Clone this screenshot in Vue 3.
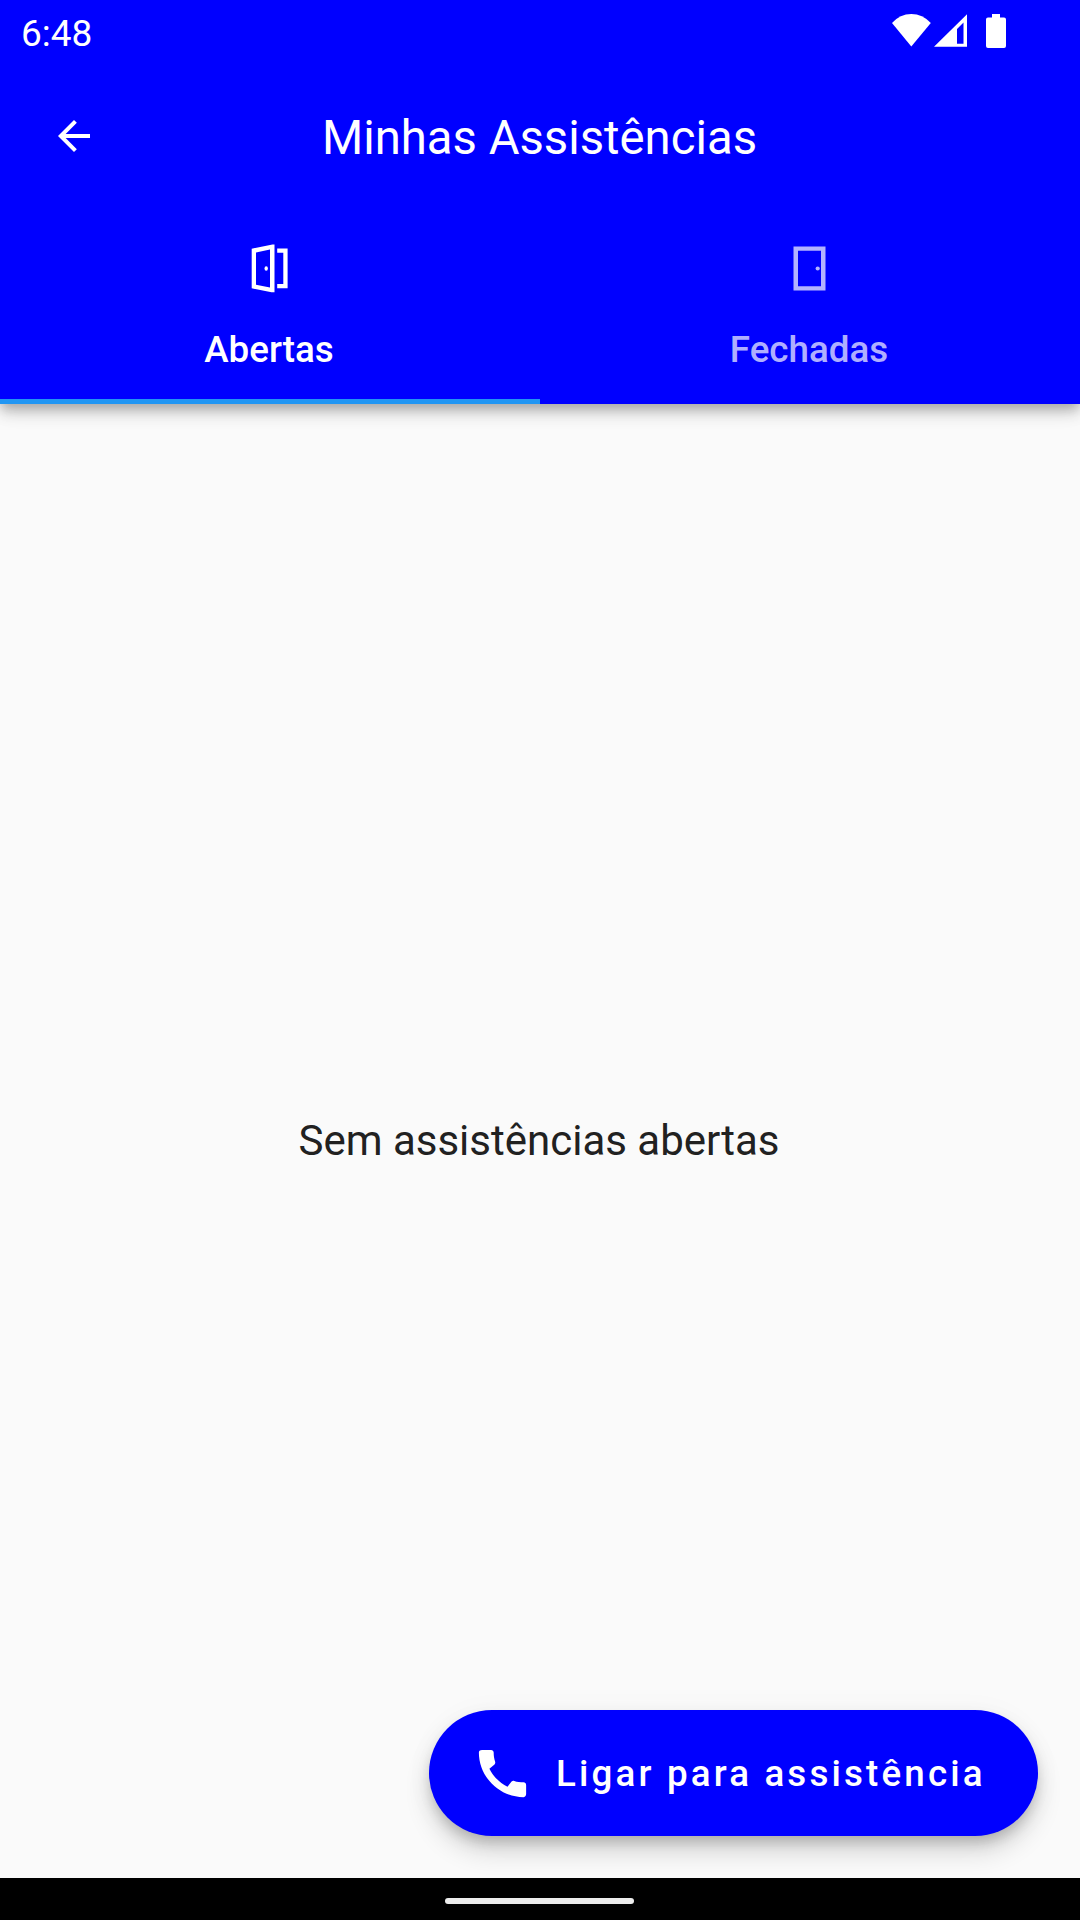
<!-- App.vue -->
<template>
  <div class="screen">
    <header class="header">
      <div class="status-bar">
        <span class="clock">6:48</span>
        <svg class="status-icons" width="116" height="36" viewBox="0 0 116 36" fill="#fff">
          <path d="M0 11Q8 2 19.300 2T38.800 11L19.300 34.500Z" />
          <path fill-rule="evenodd" d="M42 34.800L75 2.200V34.800ZM65 17V31.700H71.500V10.400Z" />
          <path d="M100 2h8v3.500h4a2 2 0 0 1 2 2V34a2 2 0 0 1-2 2H96a2 2 0 0 1-2-2V7.500a2 2 0 0 1 2-2h4z" />
        </svg>
      </div>

      <div class="app-bar">
        <button class="back" aria-label="Voltar">
          <svg width="48" height="48" viewBox="0 0 24 24" fill="#fff">
            <path d="M20 11H7.830l5.590-5.590L12 4l-8 8 8 8 1.410-1.410L7.830 13H20v-2z" />
          </svg>
        </button>
        <h1>Minhas Assistências</h1>
      </div>

      <nav class="tabs">
        <button
          v-for="tab in tabs"
          :key="tab.id"
          class="tab"
          :class="{ active: tab.id === currentTab }"
          @click="currentTab = tab.id"
        >
          <svg v-if="tab.id === 'abertas'" width="63" height="63" viewBox="0 0 63 63" fill="currentColor">
            <path fill-rule="evenodd" d="M13.700 11.700L34.500 7.500H36.500V55.200H33.500L13.700 51.300ZM18 15.400V47.800L32 50.600V12.400Z" />
            <ellipse cx="28.200" cy="31.500" rx="1.700" ry="2.200" />
            <path d="M39.200 11.500H49.600V51.200H39.200V46.900H45.300V15.800H39.200Z" />
          </svg>
          <svg v-else width="63" height="63" viewBox="0 0 63 63" fill="currentColor">
            <path fill-rule="evenodd" d="M15.500 9.500H47.500V53.500H15.500ZM20 13.700V49.300H43V13.700Z" />
            <circle cx="39.700" cy="31.500" r="2.100" />
          </svg>
          <span>{{ tab.label }}</span>
        </button>
      </nav>
    </header>

    <main class="content">
      <p class="empty">{{ emptyText }}</p>
      <button class="call">
        <svg width="63" height="63" viewBox="0 0 24 24" fill="#fff">
          <path d="M20.010 15.380c-1.230 0-2.420-.200-3.530-.560-.350-.120-.740-.030-1.010.240l-1.570 1.970c-2.830-1.350-5.480-3.900-6.890-6.830l1.950-1.660c.270-.280.350-.670.240-1.020-.370-1.110-.560-2.300-.560-3.530 0-.540-.450-.990-.990-.990H4.190C3.650 3 3 3.240 3 3.990 3 13.280 10.730 21 20.010 21c.710 0 .990-.630.990-1.180v-3.450c0-.540-.450-.990-.990-.990z" />
        </svg>
        <span>Ligar para assistência</span>
      </button>
    </main>

    <footer class="nav-bar">
      <div class="handle"></div>
    </footer>
  </div>
</template>

<script setup>
import { computed, ref } from 'vue'

const tabs = [
  { id: 'abertas', label: 'Abertas' },
  { id: 'fechadas', label: 'Fechadas' }
]

const currentTab = ref('abertas')

const emptyText = computed(() => `Sem assistências ${currentTab.value}`)
</script>

<style>
body {
  margin: 0;
}
</style>

<style scoped>
.screen {
  display: flex;
  flex-direction: column;
  width: 1080px;
  height: 1920px;
  overflow: hidden;
  background-color: #fafafa;
  font-family: Roboto, sans-serif;
}

button {
  padding: 0;
  border: none;
  background: none;
  font-family: inherit;
  cursor: pointer;
}

svg {
  display: block;
  flex-shrink: 0;
}

.header {
  position: relative;
  z-index: 1;
  flex-shrink: 0;
  height: 404px;
  background-color: #0000ff;
  color: #fff;
  box-shadow: 0 5px 10px -2px rgba(0, 0, 0, 0.2), 0 10px 13px rgba(0, 0, 0, 0.14), 0 3px 26px rgba(0, 0, 0, 0.08);
}

.status-bar {
  display: flex;
  justify-content: space-between;
  box-sizing: border-box;
  height: 63px;
  padding: 12px 72px 0 21px;
}

.clock {
  font-size: 37px;
  line-height: 43px;
}

.app-bar {
  display: grid;
  grid-template-columns: 147px 1fr 147px;
  align-items: center;
  height: 147px;
}

.back {
  justify-self: center;
  padding-bottom: 1px;
}

h1 {
  margin: 0;
  padding: 2px 1px 0 0;
  font-size: 47.25px;
  font-weight: 400;
  line-height: 56px;
  text-align: center;
}

.tabs {
  display: flex;
  height: 194px;
}

.tab {
  display: flex;
  flex: 1;
  flex-direction: column;
  align-items: center;
  gap: 28px;
  box-sizing: border-box;
  padding: 27px 2px 0 0;
  border-bottom: 5px solid transparent;
  color: rgba(255, 255, 255, 0.7);
  font-size: 36.75px;
  font-weight: 500;
  line-height: 44px;
}

.tab.active {
  border-bottom-color: #2196f3;
  color: #fff;
}

.content {
  display: flex;
  flex: 1;
  flex-direction: column;
  padding: 0 42px 42px;
}

.empty {
  display: flex;
  flex: 1;
  align-items: center;
  justify-content: center;
  margin: 0;
  padding: 166px 2px 0 0;
  color: #212121;
  font-size: 42px;
}

.call {
  display: flex;
  align-items: center;
  align-self: flex-end;
  gap: 22px;
  box-sizing: border-box;
  width: 609px;
  height: 126px;
  padding-left: 42px;
  border-radius: 63px;
  background-color: #0000ff;
  color: #fff;
  font-size: 36.75px;
  font-weight: 500;
  letter-spacing: 3.15px;
  white-space: nowrap;
  box-shadow: 0 8px 13px -3px rgba(0, 0, 0, 0.2), 0 16px 26px rgba(0, 0, 0, 0.14), 0 3px 30px rgba(0, 0, 0, 0.04);
}

.nav-bar {
  display: flex;
  align-items: center;
  justify-content: center;
  flex-shrink: 0;
  box-sizing: border-box;
  height: 42px;
  padding: 4px 1px 0 0;
  background-color: #000;
}

.handle {
  width: 189px;
  height: 6px;
  border-radius: 3px;
  background-color: #ececec;
}
</style>
